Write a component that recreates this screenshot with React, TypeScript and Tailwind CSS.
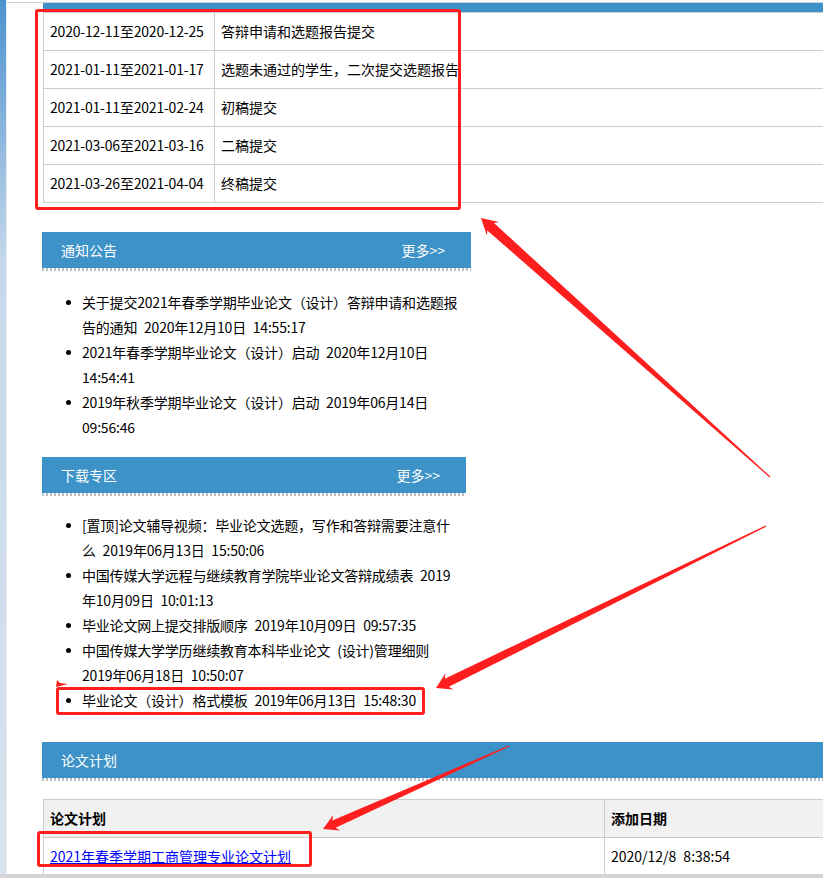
import React from "react"

// 时间安排
const schedule = [
	{ range: "2020-12-11至2020-12-25", name: "答辩申请和选题报告提交" },
	{ range: "2021-01-11至2021-01-17", name: "选题未通过的学生，二次提交选题报告" },
	{ range: "2021-01-11至2021-02-24", name: "初稿提交" },
	{ range: "2021-03-06至2021-03-16", name: "二稿提交" },
	{ range: "2021-03-26至2021-04-04", name: "终稿提交" },
]

const notices = [
	["关于提交2021年春季学期毕业论文（设计）答辩申请和选题报", "告的通知 2020年12月10日 14:55:17"],
	["2021年春季学期毕业论文（设计）启动 2020年12月10日", "14:54:41"],
	["2019年秋季学期毕业论文（设计）启动 2019年06月14日", "09:56:46"],
]

const downloads = [
	["[置顶]论文辅导视频：毕业论文选题，写作和答辩需要注意什", "么 2019年06月13日 15:50:06"],
	["中国传媒大学远程与继续教育学院毕业论文答辩成绩表 2019", "年10月09日 10:01:13"],
	["毕业论文网上提交排版顺序 2019年10月09日 09:57:35"],
	["中国传媒大学学历继续教育本科毕业论文 (设计)管理细则", "2019年06月18日 10:50:07"],
	["毕业论文（设计）格式模板 2019年06月13日 15:48:30"],
]

const Dots = () => (
	<div className="h-[3px] bg-[repeating-linear-gradient(90deg,#b9c0c8_0px,#b9c0c8_2px,#ffffff_2px,#ffffff_4px)]" />
)

const SectionHead = ({ title, more, width }: { title: string; more?: boolean; width: string }) => (
	<div className={width}>
		<div className="flex h-[36px] items-center justify-between bg-[#3d92c8] pl-[19px] pr-[26px] text-[14px] text-white">
			<span>{title}</span>
			{more && <span>更多&gt;&gt;</span>}
		</div>
		<Dots />
	</div>
)

// SimSun spaces are half an em wide
const wide = (s: string) => s.replace(/ /g, "\u2002")

const NewsList = ({ items, className }: { items: string[][]; className: string }) => (
	<ul className={className}>
		{items.map((lines, i) => (
			<li key={i} className="grid grid-cols-[40px_1fr]">
				<div className="flex h-[25px] items-center justify-end pr-[11px]">
					<span className="h-[5px] w-[5px] rounded-full bg-black" />
				</div>
				<div className="leading-[25px] tracking-[-0.2px] whitespace-nowrap">
					{lines.map((l, j) => (
						<div key={j}>{wide(l)}</div>
					))}
				</div>
			</li>
		))}
	</ul>
)

// tapered red arrow, drawn from tail to tip
function arrowPoints(tx: number, ty: number, px: number, py: number, shaft: number, head: number, headLen: number) {
	const dx = px - tx
	const dy = py - ty
	const len = Math.hypot(dx, dy)
	const ux = dx / len
	const uy = dy / len
	const nx = -uy
	const ny = ux
	const kx = px - ux * headLen
	const ky = py - uy * headLen
	const bx = px - ux * (headLen + 3)
	const by = py - uy * (headLen + 3)
	const pts = [
		[tx + nx * 0.6, ty + ny * 0.6],
		[kx + nx * shaft, ky + ny * shaft],
		[bx + nx * head, by + ny * head],
		[px, py],
		[bx - nx * head, by - ny * head],
		[kx - nx * shaft, ky - ny * shaft],
		[tx - nx * 0.6, ty - ny * 0.6],
	]
	return pts.map((p) => p[0].toFixed(1) + "," + p[1].toFixed(1)).join(" ")
}

export default function App() {
	return (
		<div className="relative flex h-[878px] w-full overflow-hidden bg-white text-[14px] text-black [font-family:'Noto_Sans_CJK_SC',sans-serif]">
			<div className="w-[7px] shrink-0 bg-gradient-to-b from-[#4a92cf] via-[#c6d8ea] via-30% to-[#d9e3ee] border-r border-[#e8eef4]" />

			<div className="min-w-0 flex-1 pt-[2px]">
				<div className="border-t border-[#d0d0d0] pl-[35px]">
					<div className="ml-[1px] h-[9px] w-[800px] bg-[#3d92c8]" />

					{/* 时间表 */}
					<div className="ml-[1px] w-[800px] border-l border-t border-[#cccccc]">
						{schedule.map((r) => (
							<div key={r.range} className="grid h-[38px] grid-cols-[171px_1fr] border-b border-[#cccccc]">
								<div className="flex items-center border-r border-[#cccccc] pl-[6px] tracking-[-0.2px] whitespace-nowrap">{r.range}</div>
								<div className="flex items-center pl-[6px] whitespace-nowrap">{r.name}</div>
							</div>
						))}
					</div>

					<div className="mt-[29px]">
						<SectionHead title="通知公告" more width="w-[429px]" />
					</div>
					<NewsList items={notices} className="mt-[19px]" />

					<div className="mt-[17px]">
						<SectionHead title="下载专区" more width="w-[424px]" />
					</div>
					<NewsList items={downloads} className="mt-[17px]" />

					<div className="mt-[29px]">
						<SectionHead title="论文计划" width="w-[800px]" />
					</div>

					<div className="ml-[1px] mt-[18px] w-[800px] border-l border-t border-[#cccccc]">
						<div className="grid h-[38px] grid-cols-[561px_1fr] border-b border-[#cccccc] bg-[#f1f1f1] font-bold">
							<div className="flex items-center border-r border-[#cccccc] pl-[6px]">论文计划</div>
							<div className="flex items-center pl-[6px]">添加日期</div>
						</div>
						<div className="grid h-[38px] grid-cols-[561px_1fr] border-b border-[#cccccc]">
							<div className="flex items-center border-r border-[#cccccc] pl-[6px]">
								<a href="#" className="text-[#0000ff] underline">
									2021年春季学期工商管理专业论文计划
								</a>
							</div>
							<div className="flex items-center pl-[6px]">{wide("2020/12/8 8:38:54")}</div>
						</div>
					</div>
				</div>
			</div>

			{/* 标注框 */}
			<div className="absolute left-[35px] top-[9px] h-[201px] w-[426px] rounded-[3px] border-[3px] border-[#ff1e1e]" />
			<div className="absolute left-[56px] top-[687px] h-[28px] w-[369px] rounded-[3px] border-[3px] border-[#ff1e1e]" />
			<div className="absolute left-[37px] top-[831px] h-[36px] w-[275px] rounded-[3px] border-[3px] border-[#ff1e1e]" />

			{/* 标注箭头 */}
			<svg className="pointer-events-none absolute left-0 top-0" width="823" height="878" viewBox="0 0 823 878">
				<polygon fill="#ff1e1e" points={arrowPoints(770, 477, 481, 218, 5, 9, 13)} />
				<polygon fill="#ff1e1e" points={arrowPoints(766, 526, 436, 688, 4.5, 9, 12)} />
				<polygon fill="#ff1e1e" points={arrowPoints(509, 746, 323, 829, 4, 8.5, 12)} />
				<polygon fill="#ff1e1e" points="56,687 57,680 60,683 68,684 60,686" />
			</svg>

			<div className="absolute bottom-0 left-0 right-0 h-[4px] bg-[#d4d4d4]" />
		</div>
	)
}
